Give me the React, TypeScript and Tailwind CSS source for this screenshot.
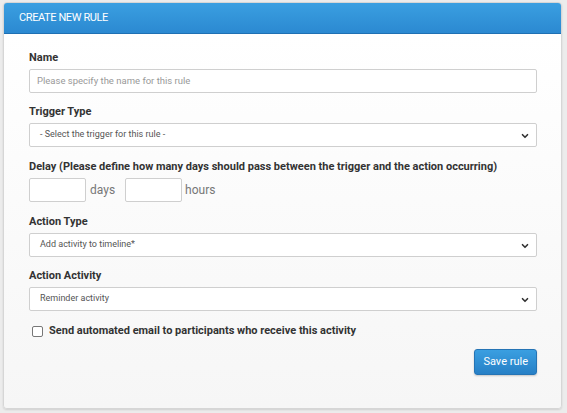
import { ChevronDown } from 'lucide-react';

const Label = ({ children }: { children: React.ReactNode }) => (
  <div className="text-[11px] font-bold leading-[15px] text-[#333] mb-[4px]">{children}</div>
);

const Select = ({ value }: { value: string }) => (
  <div className="relative h-[24px] w-full rounded-[2px] border border-[#cfcfcf] bg-white flex items-center pl-[10px] text-[9px] text-[#555]">
    {value}
    <ChevronDown size={10} strokeWidth={4} className="absolute right-[6px] top-[7px] text-[#333]" />
  </div>
);

export default function App() {
  return (
    <div className="w-[567px] h-[413px] bg-[#ececec] pt-[2px] pl-[3px] pr-[5px] pb-[4px]" style={{ fontFamily: 'Roboto, "Liberation Sans", sans-serif' }}>
      <div className="h-full flex flex-col rounded-[4px] border border-[#d6d6d6] shadow-[0_1px_2px_rgba(0,0,0,0.12)] overflow-hidden">
        {/* Header */}
        <div className="h-[31px] shrink-0 bg-gradient-to-b from-[#3a9fe1] to-[#2b89d1] border-b border-[#1f70b3] flex items-center px-[15px]">
          <span className="text-white text-[11px] uppercase tracking-[-0.4px]">Create new rule</span>
        </div>

        {/* Body */}
        <div className="flex-1 bg-gradient-to-b from-white to-[#f6f6f6] pt-[16px] pl-[25px] pr-[24px]">
          <div className="mb-[11px]">
            <Label>Name</Label>
            <div className="h-[24px] w-full rounded-[2px] border border-[#cfcfcf] bg-white flex items-center pl-[7px] text-[9.5px] text-[#999]">
              Please specify the name for this rule
            </div>
          </div>

          <div className="mb-[12px]">
            <Label>Trigger Type</Label>
            <Select value="- Select the trigger for this rule -" />
          </div>

          <div className="mb-[12px]">
            <Label>Delay (Please define how many days should pass between the trigger and the action occurring)</Label>
            <div className="flex items-center h-[24px] text-[12px] text-[#777]">
              <div className="h-[24px] w-[57px] rounded-[2px] border border-[#cfcfcf] bg-white" />
              <span className="ml-[4px] mr-[10px]">days</span>
              <div className="h-[24px] w-[57px] rounded-[2px] border border-[#cfcfcf] bg-white" />
              <span className="ml-[3px]">hours</span>
            </div>
          </div>

          <div className="mb-[11px]">
            <Label>Action Type</Label>
            <Select value="Add activity to timeline*" />
          </div>

          <div className="mb-[13px]">
            <Label>Action Activity</Label>
            <Select value="Reminder activity" />
          </div>

          <div className="flex items-center pl-[3px] h-[14px]">
            <div className="w-[11px] h-[11px] rounded-[2px] border border-[#777] bg-white" />
            <span className="ml-[6px] text-[11px] font-bold text-[#333]">
              Send automated email to participants who receive this activity
            </span>
          </div>

          <div className="flex justify-end mt-[11px]">
            <button className="h-[26px] px-[8px] rounded-[3px] bg-gradient-to-b from-[#3a9fe1] to-[#2780c6] border border-[#2574b5] text-white text-[11px] shadow-[0_1px_2px_rgba(0,0,0,0.2)]">
              Save rule
            </button>
          </div>
        </div>
      </div>
    </div>
  );
}
